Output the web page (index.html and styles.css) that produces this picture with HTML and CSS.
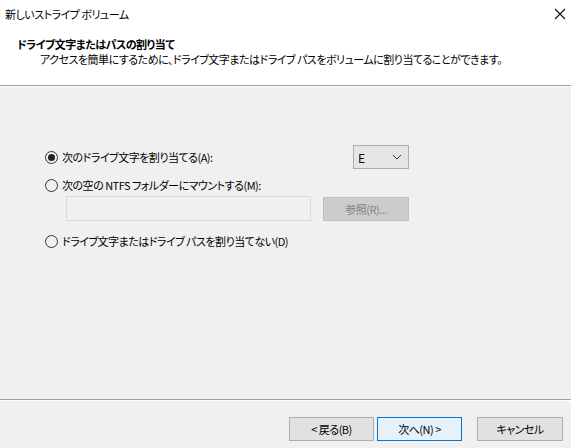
FILE: index.html
```html
<!DOCTYPE html>
<html lang="ja">
<head>
    <meta charset="UTF-8">
    <title>新しいストライプ ボリューム</title>
    <link rel="stylesheet" href="styles.css">
</head>
<body>
    <div class="wizard">
        <div class="titlebar">
            <span class="title">新しいストライプ ボリューム</span>
            <svg class="close" width="12" height="12" viewBox="0 0 12 12">
                <path d="M1 1 L11 11 M11 1 L1 11" stroke="#111" stroke-width="1.1" fill="none"/>
            </svg>
        </div>
        <div class="header">
            <div class="heading">ドライブ文字またはパスの割り当て</div>
            <div class="subheading">アクセスを簡単にするために、ドライブ文字またはドライブ パスをボリュームに割り当てることができます。</div>
        </div>

        <div class="content">
            <div class="options">
                <div class="row first">
                    <label class="radio"><span class="dot checked"></span>次のドライブ文字を割り当てる(A):</label>
                    <div class="select">
                        <span>E</span>
                        <svg width="10" height="6" viewBox="0 0 10 6">
                            <path d="M1 1 L5 5 L9 1" stroke="#333" stroke-width="1" fill="none"/>
                        </svg>
                    </div>
                </div>
                <div class="row second">
                    <label class="radio"><span class="dot"></span>次の空の NTFS フォルダーにマウントする(M):</label>
                </div>
                <div class="row path">
                    <div class="textbox"></div>
                    <button class="btn disabled">参照(R)...</button>
                </div>
                <div class="row third">
                    <label class="radio"><span class="dot"></span>ドライブ文字またはドライブ パスを割り当てない(D)</label>
                </div>
            </div>
        </div>

        <div class="footer">
            <button class="btn">&lt; 戻る(B)</button>
            <button class="btn primary">次へ(N) &gt;</button>
            <button class="btn cancel">キャンセル</button>
        </div>
    </div>
</body>
</html>
```

FILE: styles.css
```css
body {
    margin: 0;
    font-family: "Noto Sans CJK JP", "Noto Sans", sans-serif;
    font-size: 11px;
    letter-spacing: -0.5px;
    font-feature-settings: "palt";
    color: #000;
}

.wizard {
    width: 571px;
    height: 448px;
    display: flex;
    flex-direction: column;
    background-color: #f0f0f0;
}

.titlebar {
    height: 29px;
    display: flex;
    align-items: center;
    justify-content: space-between;
    padding: 0 5px 2px 5px;
    box-sizing: border-box;
    background-color: #fff;
}

.title {
    line-height: 14px;
}

.header {
    height: 57px;
    background-color: #fff;
    border-bottom: 1px solid #a0a0a0;
    padding: 8px 0 0 17px;
    box-sizing: border-box;
    line-height: 15px;
}

.heading {
    font-weight: bold;
}

.subheading {
    padding-left: 23px;
}

.content {
    flex: 1;
    border-top: 1px solid #fff;
    border-bottom: 1px solid #a0a0a0;
    padding: 58px 0 0 45px;
}

.options {
    width: 364px;
}

.row {
    display: flex;
    align-items: center;
}

.row.first {
    height: 24px;
    justify-content: space-between;
}

.row.second {
    height: 14px;
    margin-top: 9px;
}

.row.path {
    height: 25px;
    margin-top: 4px;
    justify-content: space-between;
    padding-left: 21px;
}

.row.third {
    height: 14px;
    margin-top: 13px;
}

.radio {
    display: flex;
    align-items: center;
    line-height: 14px;
}

.dot {
    width: 11px;
    height: 11px;
    border: 1px solid #333;
    border-radius: 50%;
    margin-right: 4px;
    display: flex;
    align-items: center;
    justify-content: center;
}

.dot.checked::after {
    content: "";
    width: 7px;
    height: 7px;
    border-radius: 50%;
    background-color: #222;
}

.select {
    width: 56px;
    height: 24px;
    box-sizing: border-box;
    border: 1px solid #adadad;
    background-color: #e5e5e5;
    display: flex;
    align-items: center;
    justify-content: space-between;
    padding: 0 6px 0 4px;
    font-size: 12px;
}

.textbox {
    width: 245px;
    height: 25px;
    box-sizing: border-box;
    border: 1px solid #d9d9d9;
    background-color: #f0f0f0;
}

.btn {
    height: 24px;
    box-sizing: border-box;
    border: 1px solid #adadad;
    background-color: #e1e1e1;
    font-family: inherit;
    font-size: 11px;
    letter-spacing: -0.5px;
    font-feature-settings: "palt";
    color: #000;
    padding: 0;
    width: 86px;
}

.btn.disabled {
    background-color: #cccccc;
    border-color: #bfbfbf;
    color: #838383;
}

.btn.primary {
    border-color: #0078d7;
    background-color: #e5f1fb;
}

.footer {
    border-top: 1px solid #fff;
    height: 48px;
    box-sizing: border-box;
    display: flex;
    align-items: flex-start;
    padding: 16px 0 0 289px;
}

.footer .btn {
    width: 85px;
}

.footer .primary {
    margin-left: 3px;
}

.footer .cancel {
    margin-left: 15px;
    width: 86px;
}
```
